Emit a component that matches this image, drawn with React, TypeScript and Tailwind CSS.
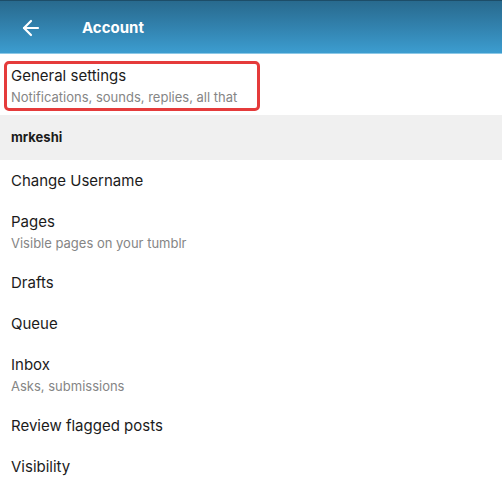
import React from "react";
import { ArrowLeft } from "lucide-react";

const font = { fontFamily: "Inter, 'Noto Sans', sans-serif" };

function Single({ title }: { title: string }) {
  return (
    <div className="h-[41px] flex items-center pt-[1px] px-[11px] text-[15px] text-[#1b1b1b]">{title}</div>
  );
}

function Double({ title, sub }: { title: string; sub: string }) {
  return (
    <div className="h-[61px] flex flex-col px-[11px] pt-[11px]">
      <div className="text-[15px] leading-[20px] text-[#1b1b1b]">{title}</div>
      <div className="text-[13px] leading-[22px] text-[#858585]">{sub}</div>
    </div>
  );
}

export default function App() {
  return (
    <div className="w-[502px] h-[500px] overflow-hidden bg-white" style={font}>
      <div className="h-[54px] relative flex items-center pt-[2px] bg-gradient-to-b from-[#286a8e] via-[#3282ae] to-[#3c9dd0] border-t border-[#1d4d68] border-b border-b-[#8cc8e6]">
        <div className="w-[82px] flex items-center pl-[19px]">
          <ArrowLeft size={24} strokeWidth={2.2} color="#ffffff" />
        </div>
        <div className="text-white font-bold text-[15px]">Account</div>
      </div>
      <div className="relative">
        <div className="h-[61px] flex flex-col px-[11px] pt-[12px]">
          <div className="text-[15px] leading-[20px] text-[#1b1b1b]">General settings</div>
          <div className="text-[13px] leading-[22px] text-[#858585]">Notifications, sounds, replies, all that</div>
        </div>
        <div className="absolute left-[4px] top-[7px] w-[256px] h-[50px] border-[3px] border-[#e53b3b] rounded-[5px]" />
      </div>
      <div className="h-[45px] bg-[#f0f0f0] flex items-center pt-[1px] px-[11px] text-[13px] font-bold text-[#1b1b1b]">mrkeshi</div>
      <Single title="Change Username" />
      <Double title="Pages" sub="Visible pages on your tumblr" />
      <Single title="Drafts" />
      <Single title="Queue" />
      <Double title="Inbox" sub="Asks, submissions" />
      <Single title="Review flagged posts" />
      <Single title="Visibility" />
      <Single title="Likes and following" />
    </div>
  );
}
